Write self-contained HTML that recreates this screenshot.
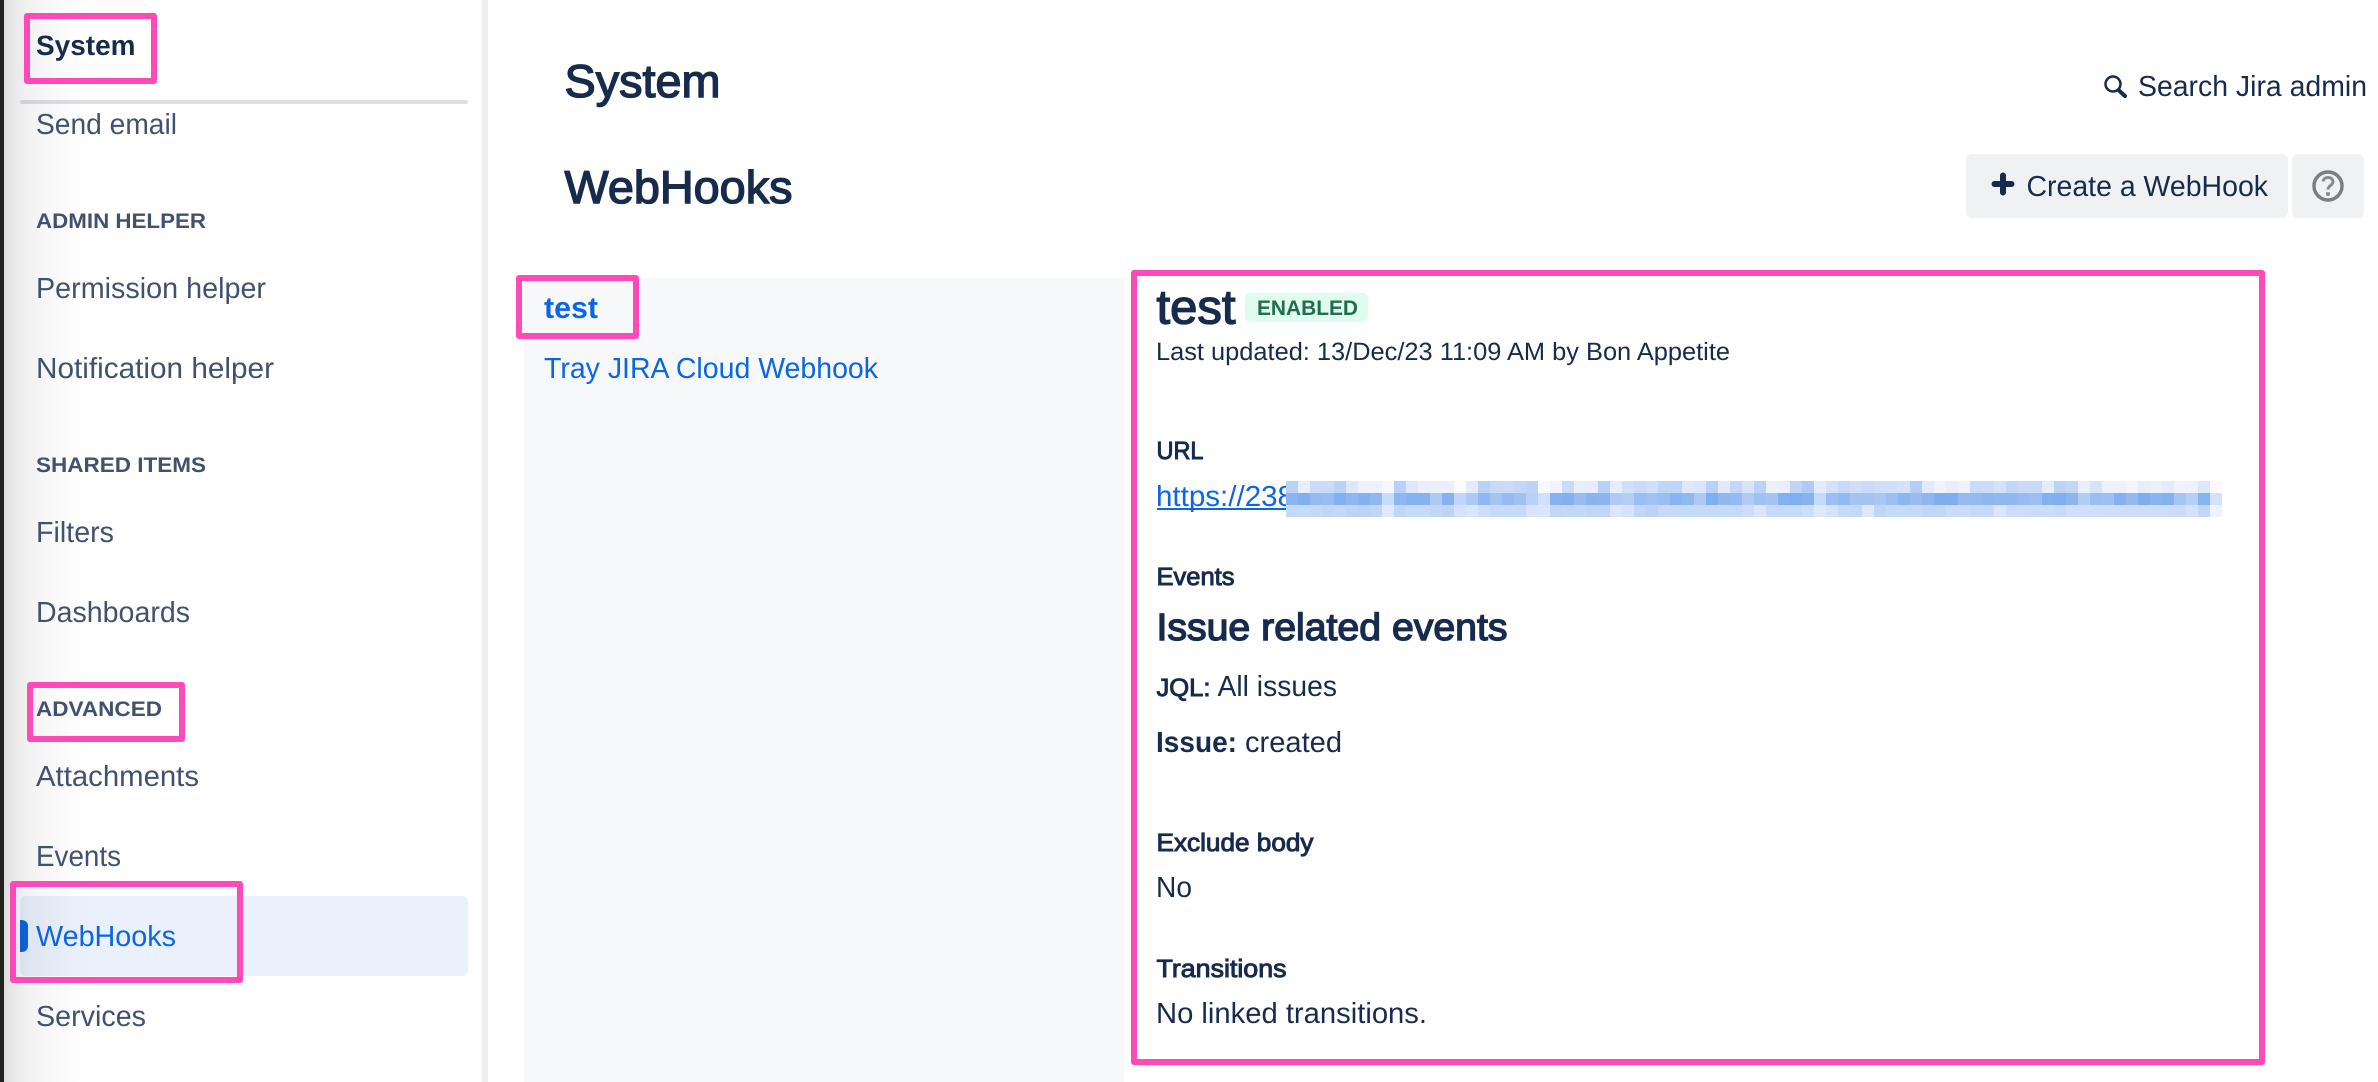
<!DOCTYPE html>
<html lang="en">
<head>
<meta charset="utf-8">
<title>WebHooks</title>
<style>
html,body{margin:0;padding:0;background:#fff;width:2378px;height:1082px;overflow:hidden}
#root{position:relative;width:2378px;height:1082px;overflow:hidden;background:#fff}
.a{position:absolute;box-sizing:border-box}
.pink{border:6px solid #fd4ab8;border-radius:3px;background:transparent}
#blur{position:absolute;left:1286px;top:481px;width:936px;height:36px;display:grid;grid-template-columns:repeat(78,12px);grid-auto-rows:12px}
#blur i{display:block}
svg{position:absolute;left:0;top:0}
text{font-family:"Liberation Sans",Arial,sans-serif;text-rendering:geometricPrecision}
.n{fill:#42526e;font-size:29px}
.g{fill:#42526e;font-size:21px;font-weight:700}
.d{fill:#172b4d}
.b{font-weight:700}
.m{stroke:#172b4d;stroke-width:.95px}
.h{stroke:#172b4d;stroke-width:1.4px}
.l{fill:#0c66e4}
</style>
</head>
<body>
<div id="root">
  <div class="a" style="left:482px;top:0;width:6px;height:1082px;background:#ecedf1"></div>
  <div class="a" style="left:20px;top:100px;width:448px;height:4px;background:#dedfe5;border-radius:2px"></div>
  <div class="a" style="left:20px;top:896px;width:448px;height:80px;background:#eaf1fd;border-radius:6px"></div>
  <div class="a" style="left:20px;top:920px;width:8px;height:32px;background:#0c66e4;border-radius:0 6px 6px 0"></div>
  <div class="a" style="left:4px;top:0;width:90px;height:1082px;mix-blend-mode:multiply;background:linear-gradient(90deg,#dcdcdc 0,#e9e9e9 10px,#f2f2f2 24px,#f8f8f8 44px,#fdfdfd 70px,#fff 90px)"></div>
  <div class="a" style="left:0;top:0;width:4px;height:1082px;background:#23211f"></div>

  <div class="a" style="left:524px;top:278px;width:600px;height:804px;background:#f7f8f9"></div>
  <div class="a" style="left:1966px;top:154px;width:322px;height:64px;background:#f0f1f3;border-radius:6px"></div>
  <div class="a" style="left:2292px;top:154px;width:72px;height:64px;background:#f0f1f3;border-radius:6px"></div>
  <div class="a" style="left:1245px;top:293px;width:123px;height:29px;background:#dffcf0;border-radius:5px"></div>

  <svg width="2378" height="1082" viewBox="0 0 2378 1082" xmlns="http://www.w3.org/2000/svg">
    <text x="36" y="55" class="d b" font-size="28" textLength="99.5" lengthAdjust="spacingAndGlyphs">System</text>
    <text x="36" y="134" class="n" textLength="141" lengthAdjust="spacingAndGlyphs">Send email</text>
    <text x="36" y="228" class="g" textLength="170" lengthAdjust="spacingAndGlyphs">ADMIN HELPER</text>
    <text x="36" y="298" class="n" textLength="230" lengthAdjust="spacingAndGlyphs">Permission helper</text>
    <text x="36" y="378" class="n" textLength="238" lengthAdjust="spacingAndGlyphs">Notification helper</text>
    <text x="36" y="472" class="g" textLength="170" lengthAdjust="spacingAndGlyphs">SHARED ITEMS</text>
    <text x="36" y="542" class="n" textLength="78" lengthAdjust="spacingAndGlyphs">Filters</text>
    <text x="36" y="622" class="n" textLength="154" lengthAdjust="spacingAndGlyphs">Dashboards</text>
    <text x="36" y="716" class="g" textLength="126" lengthAdjust="spacingAndGlyphs">ADVANCED</text>
    <text x="36" y="786" class="n" textLength="163" lengthAdjust="spacingAndGlyphs">Attachments</text>
    <text x="36" y="866" class="n" textLength="85" lengthAdjust="spacingAndGlyphs">Events</text>
    <text x="36" y="946" class="n" style="fill:#0c66e4" textLength="140" lengthAdjust="spacingAndGlyphs">WebHooks</text>
    <text x="36" y="1026" class="n" textLength="110" lengthAdjust="spacingAndGlyphs">Services</text>

    <text x="564.500" y="97" class="d h" font-size="46" textLength="156" lengthAdjust="spacingAndGlyphs">System</text>
    <text x="564.500" y="203" class="d h" font-size="46" textLength="228" lengthAdjust="spacingAndGlyphs">WebHooks</text>

    <circle cx="2113" cy="84" r="7.500" fill="none" stroke="#172b4d" stroke-width="2.500"/>
    <path d="M2119 90.500L2125 96" fill="none" stroke="#172b4d" stroke-width="4" stroke-linecap="round"/>
    <text x="2138" y="96" class="d" font-size="29" textLength="229" lengthAdjust="spacingAndGlyphs">Search Jira admin</text>

    <path d="M2003 175.500V192.500M1994.500 184H2011.500" fill="none" stroke="#172b4d" stroke-width="6" stroke-linecap="round"/>
    <text x="2026.500" y="196" class="d" font-size="29" textLength="241.500" lengthAdjust="spacingAndGlyphs">Create a WebHook</text>

    <circle cx="2328" cy="186" r="14" fill="none" stroke="#7d7d7d" stroke-width="3.500"/>
    <path d="M2323 181.500C2323.500 178.500 2325.500 177.500 2328 177.500C2331 177.500 2333 179.300 2333 181.800C2333 185.500 2328 185.500 2328 189.500" fill="none" stroke="#8a8a8a" stroke-width="3"/>
    <circle cx="2328" cy="194" r="2" fill="#8a8a8a"/>

    <text x="544" y="318" class="l b" font-size="30" textLength="54" lengthAdjust="spacingAndGlyphs">test</text>
    <text x="544" y="378" class="l" font-size="29" textLength="334" lengthAdjust="spacingAndGlyphs">Tray JIRA Cloud Webhook</text>

    <text x="1156.500" y="323.500" class="d h" font-size="48" textLength="79" lengthAdjust="spacingAndGlyphs">test</text>
    <text x="1257" y="315" class="b" style="fill:#216e4e" font-size="21" textLength="101" lengthAdjust="spacingAndGlyphs">ENABLED</text>
    <text x="1156" y="360" class="d" font-size="25" textLength="574" lengthAdjust="spacingAndGlyphs">Last updated: 13/Dec/23 11:09 AM by Bon Appetite</text>

    <text x="1156.500" y="459" class="d m" font-size="25" textLength="47" lengthAdjust="spacingAndGlyphs">URL</text>
    <text x="1156" y="506" class="l" font-size="29" textLength="138" lengthAdjust="spacingAndGlyphs">https://238</text>
    <rect x="1157" y="508" width="129" height="2" fill="#0c66e4"/>

    <text x="1156.500" y="585" class="d m" font-size="25" textLength="78" lengthAdjust="spacingAndGlyphs">Events</text>
    <text x="1156.500" y="640" class="d h" font-size="38" textLength="351" lengthAdjust="spacingAndGlyphs">Issue related events</text>
    <text x="1156.500" y="696" class="d m" font-size="25" textLength="54" lengthAdjust="spacingAndGlyphs">JQL:</text>
    <text x="1217.500" y="696" class="d" font-size="29" textLength="119.500" lengthAdjust="spacingAndGlyphs">All issues</text>
    <text x="1156" y="752" class="d b" font-size="29" textLength="81" lengthAdjust="spacingAndGlyphs">Issue:</text>
    <text x="1245" y="752" class="d" font-size="29" textLength="97" lengthAdjust="spacingAndGlyphs">created</text>
    <text x="1156.500" y="851" class="d m" font-size="25" textLength="157" lengthAdjust="spacingAndGlyphs">Exclude body</text>
    <text x="1156" y="897" class="d" font-size="29" textLength="36" lengthAdjust="spacingAndGlyphs">No</text>
    <text x="1156.500" y="977" class="d m" font-size="25" textLength="130" lengthAdjust="spacingAndGlyphs">Transitions</text>
    <text x="1156" y="1023" class="d" font-size="29" textLength="271" lengthAdjust="spacingAndGlyphs">No linked transitions.</text>
  </svg>

  <div id="blur">
<i style="background:#b9d2f8"></i><i style="background:#e8effc"></i><i style="background:#c9dbf9"></i><i style="background:#c8dbf9"></i><i style="background:#bbd2f7"></i><i style="background:#dde8fb"></i><i style="background:#ecf2fd"></i><i style="background:#ebf1fd"></i><i style="background:#f5f8fe"></i><i style="background:#b9d1f7"></i><i style="background:#dde8fb"></i><i style="background:#e9effc"></i><i style="background:#e9effc"></i><i style="background:#ebf0fc"></i><i style="background:#f8faff"></i><i style="background:#e4ecfc"></i><i style="background:#bad1f6"></i><i style="background:#c7daf8"></i><i style="background:#c9dbf9"></i><i style="background:#c3d7f8"></i><i style="background:#bed4f7"></i><i style="background:#f6f9fe"></i><i style="background:#eff3fd"></i><i style="background:#c8dbf9"></i><i style="background:#e8effc"></i><i style="background:#e6edfc"></i>
<i style="background:#b8d1f7"></i><i style="background:#e5eefc"></i><i style="background:#d0e0fa"></i><i style="background:#c8dbf9"></i><i style="background:#cee0fa"></i><i style="background:#c0d6f7"></i><i style="background:#bfd5f7"></i><i style="background:#dfe9fb"></i><i style="background:#dae6fb"></i><i style="background:#b9d1f7"></i><i style="background:#e0eafb"></i><i style="background:#c1d6f8"></i><i style="background:#d6e3fa"></i><i style="background:#bad2f7"></i><i style="background:#eaf1fd"></i><i style="background:#e9f0fd"></i><i style="background:#bed4f7"></i><i style="background:#b0caf5"></i><i style="background:#e2ebfb"></i><i style="background:#d3e1fa"></i><i style="background:#c6daf8"></i><i style="background:#cfdff9"></i><i style="background:#c9dbf8"></i><i style="background:#cfdff9"></i><i style="background:#d1e0fa"></i><i style="background:#d4e2fa"></i><i style="background:#b4cdf6"></i>
<i style="background:#e2ebfb"></i><i style="background:#eef3fd"></i><i style="background:#e7f0fa"></i><i style="background:#edf3fd"></i><i style="background:#c9dbf8"></i><i style="background:#cadcf8"></i><i style="background:#d4e2f9"></i><i style="background:#c2d6f6"></i><i style="background:#c8daf8"></i><i style="background:#c8daf7"></i><i style="background:#e4edfa"></i><i style="background:#bcd3f7"></i><i style="background:#c2d6f6"></i><i style="background:#e7f0fc"></i><i style="background:#d6e3fa"></i><i style="background:#ebf1fd"></i><i style="background:#ebf1fd"></i><i style="background:#f2f6fe"></i><i style="background:#e6eefb"></i><i style="background:#e9f1fd"></i><i style="background:#e3ecfc"></i><i style="background:#eff3fd"></i><i style="background:#eef2fd"></i><i style="background:#dde8fb"></i><i style="background:#f8fafe"></i>
<i style="background:#8cb5f0"></i><i style="background:#82aff0"></i><i style="background:#95baf1"></i><i style="background:#98bcf1"></i><i style="background:#84aff0"></i><i style="background:#8fb6f0"></i><i style="background:#85b1f0"></i><i style="background:#8fb7f1"></i><i style="background:#c8dbf9"></i><i style="background:#8fb6f0"></i><i style="background:#87b2f0"></i><i style="background:#87b2f0"></i><i style="background:#aec9f4"></i><i style="background:#85b1f0"></i><i style="background:#c0d5f7"></i><i style="background:#aec9f4"></i><i style="background:#8fb7f1"></i><i style="background:#a4c3f3"></i><i style="background:#97bbf1"></i><i style="background:#a2c1f3"></i><i style="background:#b9d1f7"></i><i style="background:#d2e0fa"></i><i style="background:#87b2f0"></i><i style="background:#83b0f0"></i><i style="background:#97bcf2"></i><i style="background:#8ab4f0"></i>
<i style="background:#8cb5f0"></i><i style="background:#aecaf5"></i><i style="background:#b5cef6"></i><i style="background:#9abdf2"></i><i style="background:#a1c1f3"></i><i style="background:#9abdf2"></i><i style="background:#8ab4f0"></i><i style="background:#90b8f1"></i><i style="background:#aec9f4"></i><i style="background:#80aef0"></i><i style="background:#92b8f1"></i><i style="background:#96bbf2"></i><i style="background:#b2cbf5"></i><i style="background:#a1c1f3"></i><i style="background:#a5c3f3"></i><i style="background:#84b0f0"></i><i style="background:#81aef0"></i><i style="background:#87b2f0"></i><i style="background:#c5d9f8"></i><i style="background:#9cbef2"></i><i style="background:#92b9f1"></i><i style="background:#a5c3f3"></i><i style="background:#a6c4f3"></i><i style="background:#aac6f4"></i><i style="background:#9cbef2"></i><i style="background:#8eb6f0"></i><i style="background:#99bcf2"></i>
<i style="background:#8eb6f0"></i><i style="background:#7fadee"></i><i style="background:#7fadee"></i><i style="background:#94baf0"></i><i style="background:#94baf0"></i><i style="background:#8fb6f1"></i><i style="background:#91b8f1"></i><i style="background:#91b8f1"></i><i style="background:#97bcf1"></i><i style="background:#9cbef1"></i><i style="background:#84b1ee"></i><i style="background:#82afef"></i><i style="background:#8eb6ee"></i><i style="background:#b2ccf5"></i><i style="background:#9abdf2"></i><i style="background:#9dbff2"></i><i style="background:#85b1f0"></i><i style="background:#93b9f0"></i><i style="background:#7fadec"></i><i style="background:#8ab4f0"></i><i style="background:#85b1ec"></i><i style="background:#a7c5f3"></i><i style="background:#b6cff6"></i><i style="background:#87b3ef"></i><i style="background:#d3e2fa"></i>
<i style="background:#c4d8f8"></i><i style="background:#c5d9f8"></i><i style="background:#c4d8f8"></i><i style="background:#c0d5f7"></i><i style="background:#c3d7f8"></i><i style="background:#bed4f7"></i><i style="background:#bcd3f7"></i><i style="background:#c1d6f7"></i><i style="background:#dfe9fb"></i><i style="background:#c2d6f7"></i><i style="background:#c5d9f8"></i><i style="background:#c7daf8"></i><i style="background:#c2d6f7"></i><i style="background:#bdd4f6"></i><i style="background:#d3e1fb"></i><i style="background:#d9e5fb"></i><i style="background:#cbddf9"></i><i style="background:#c5d9f8"></i><i style="background:#c5d9f8"></i><i style="background:#c5d9f8"></i><i style="background:#d8e4fb"></i><i style="background:#dae6fb"></i><i style="background:#c1d6f7"></i><i style="background:#c3d8f8"></i><i style="background:#c4d8f8"></i><i style="background:#c1d6f7"></i>
<i style="background:#c0d5f7"></i><i style="background:#dce7fb"></i><i style="background:#d6e3fa"></i><i style="background:#c0d5f7"></i><i style="background:#bcd3f6"></i><i style="background:#c6d9f8"></i><i style="background:#c6d9f8"></i><i style="background:#c5d9f8"></i><i style="background:#c5d9f8"></i><i style="background:#c5d9f8"></i><i style="background:#c5d9f8"></i><i style="background:#c5d9f8"></i><i style="background:#ccdcf9"></i><i style="background:#dae6fb"></i><i style="background:#c7daf8"></i><i style="background:#c5d9f8"></i><i style="background:#c5d9f8"></i><i style="background:#cddefa"></i><i style="background:#dde8fb"></i><i style="background:#d4e2fa"></i><i style="background:#c5d9f8"></i><i style="background:#c4d8f8"></i><i style="background:#dee8fb"></i><i style="background:#c1d6f7"></i><i style="background:#c5d9f8"></i><i style="background:#c5d9f8"></i><i style="background:#c6daf8"></i>
<i style="background:#c0d5f7"></i><i style="background:#c1d6f7"></i><i style="background:#c9dcf8"></i><i style="background:#c9dcf8"></i><i style="background:#c6daf8"></i><i style="background:#c6daf8"></i><i style="background:#d9e5fb"></i><i style="background:#cbddf9"></i><i style="background:#cbddf9"></i><i style="background:#c9dcf8"></i><i style="background:#c9dcf8"></i><i style="background:#c7daf8"></i><i style="background:#cfdff9"></i><i style="background:#cfdff9"></i><i style="background:#cfdff9"></i><i style="background:#cddefa"></i><i style="background:#cddefa"></i><i style="background:#cddefa"></i><i style="background:#cbddf9"></i><i style="background:#cbddf9"></i><i style="background:#cbddf9"></i><i style="background:#c9dcf8"></i><i style="background:#d3e1fb"></i><i style="background:#c1d6f7"></i><i style="background:#eef3fd"></i>
  </div>

  <div class="a pink" style="left:24px;top:13px;width:133px;height:71px"></div>
  <div class="a pink" style="left:27px;top:682px;width:158px;height:60px"></div>
  <div class="a pink" style="left:10px;top:881px;width:233px;height:102px"></div>
  <div class="a pink" style="left:516px;top:275px;width:123px;height:64px"></div>
  <div class="a pink" style="left:1131px;top:270px;width:1134px;height:795px"></div>
</div>
</body>
</html>
